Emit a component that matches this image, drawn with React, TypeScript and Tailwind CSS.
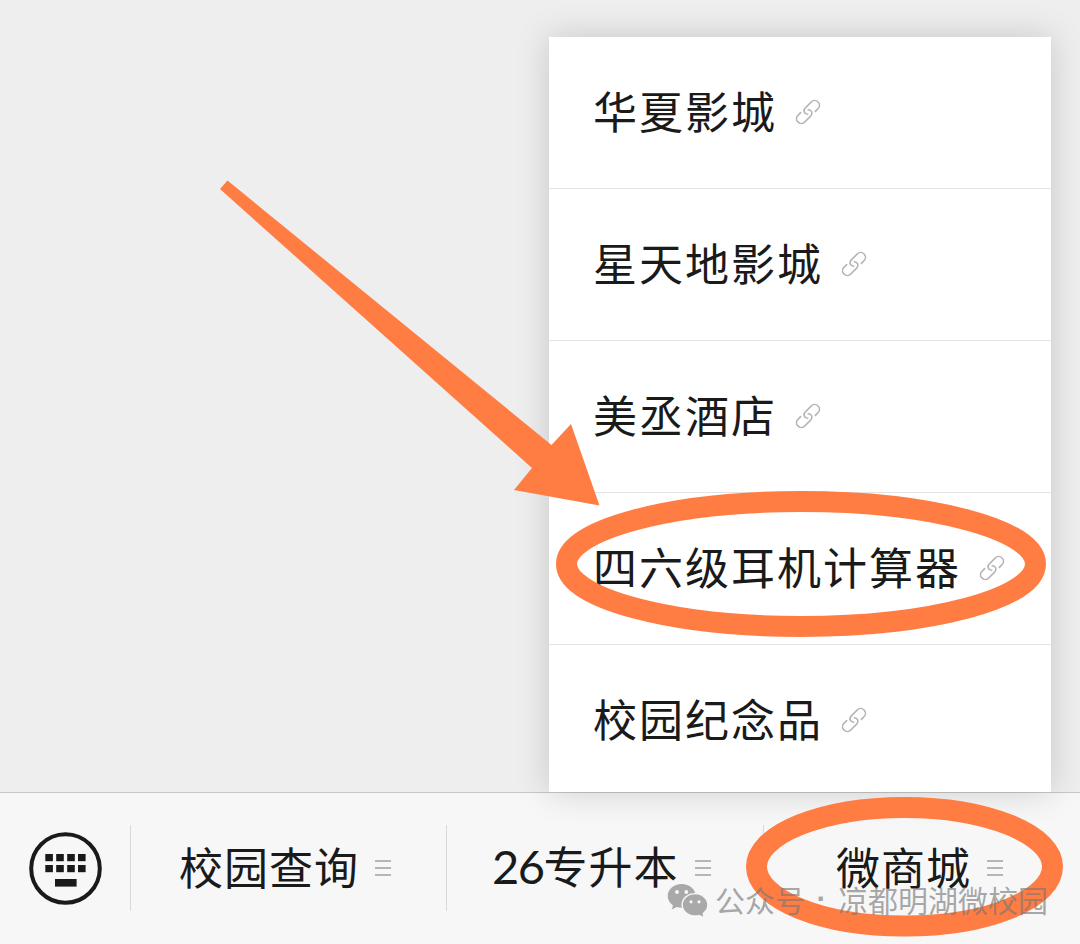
import React from 'react';

interface MenuItem { label: string; }
interface Tab { num?: string; label: string; className: string; }

const MENU: MenuItem[] = [
  { label: '华夏影城' },
  { label: '星天地影城' },
  { label: '美丞酒店' },
  { label: '四六级耳机计算器' },
  { label: '校园纪念品' },
];

const TABS: Tab[] = [
  { label: '校园查询', className: 'w-[316px] pl-[48px]' },
  { num: '26', label: '专升本', className: 'w-[317px] pl-[45px]' },
  { label: '微商城', className: 'w-[316px] pl-[72px]' },
];

function LinkIcon() {
  return (
    <svg width="26" height="26" viewBox="0 0 26 26" fill="none" stroke="#b3b3b3" strokeWidth="1.6" strokeLinecap="round" className="relative -top-px shrink-0">
      <g transform="translate(13 13) rotate(-45)">
        <path d="M-1.800 1.400C-4.200 -1.200 -2.400 -4.800 1 -4.800H9.400A4.800 4.800 0 0 1 9.400 4.800H5.600" />
        <path d="M1.800 -1.400C4.200 1.200 2.400 4.800 -1 4.800H-9.400A4.800 4.800 0 0 1 -9.400 -4.800H-5.600" />
      </g>
    </svg>
  );
}

function KeyboardIcon() {
  return (
    <svg width="74" height="74" viewBox="0 0 74 74" className="shrink-0">
      <circle cx="37.500" cy="36.500" r="34.300" fill="none" stroke="#1a1a1a" strokeWidth="4" />
      {[22, 33].map(y => [17.300, 28.200, 39.200, 50].map(x => (
        <rect key={`${x},${y}`} x={x} y={y} width="7.600" height="7.200" fill="#1a1a1a" />
      )))}
      <rect x="27" y="47" width="21.600" height="7.600" fill="#1a1a1a" />
    </svg>
  );
}

function WechatIcon() {
  return (
    <svg width="42" height="34" viewBox="0 0 42 34" className="shrink-0">
      <path d="M14.600 1C6.900 1 .7 6.300 .7 13c0 3.900 2 7.200 5.300 9.400L4.800 26.600l5-2.600c1.500.4 3.100.7 4.800.7 7.900 0 14.100-5.200 14.100-11.800S22.500 1 14.600 1Z" fill="#a9a9a9" />
      <ellipse cx="28" cy="21.800" rx="12.900" ry="11.200" fill="#a9a9a9" stroke="#f7f7f7" strokeWidth="1.400" />
      <path d="M31.500 31.500l4.700 2-1-4.800Z" fill="#a9a9a9" />
      <circle cx="10" cy="9" r="1.900" fill="#f7f7f7" />
      <circle cx="19.300" cy="9" r="1.900" fill="#f7f7f7" />
      <circle cx="24" cy="18.800" r="1.600" fill="#f7f7f7" />
      <circle cx="32" cy="18.800" r="1.600" fill="#f7f7f7" />
    </svg>
  );
}

export default function App() {
  return (
    <div className="relative flex h-[944px] w-[1080px] flex-col overflow-hidden bg-[#eeeeee] font-['Noto_Sans_CJK_SC',sans-serif] text-[44px] leading-none text-[#1a1a1a]">
      <div className="relative z-10 flex h-[792px] justify-end pt-[37px] pr-[29px]">
        <div className="h-[755px] w-[502px] bg-white shadow-[0_0_32px_rgba(0,0,0,0.17)]">
          {MENU.map((item, i) => (
            <div key={item.label} className={`flex h-[152px] items-center pl-[44px] tracking-[2px] ${i < MENU.length - 1 ? 'border-b border-[#e3e3e3]' : ''}`}>
              <span className="mr-[18px] pb-[6px] whitespace-nowrap">{item.label}</span>
              <LinkIcon />
            </div>
          ))}
        </div>
      </div>

      <div className="flex h-[152px] items-center border-t border-[#c8c8c8] bg-[#f7f7f7]">
        <div className="flex w-[130px] pl-[28px]"><KeyboardIcon /></div>
        {TABS.map(tab => (
          <div key={tab.label} className={`mb-[2px] flex h-[86px] items-center border-l border-[#d9d9d9] ${tab.className}`}>
            <div className={`mr-[16px] flex h-[44px] items-baseline whitespace-nowrap tracking-[1px] ${tab.num ? '-mt-[4px]' : ''}`}>
              {tab.num && <span className="font-['Lato'] text-[47px] leading-[44px] tracking-[-1.500px]">{tab.num}</span>}
              <span className="-mt-[2px]">{tab.label}</span>
            </div>
            <div className="flex w-4 flex-col gap-[5px]">
              <div className="h-[2px] bg-[#b5b5b5]" />
              <div className="h-[2px] bg-[#b5b5b5]" />
              <div className="h-[2px] bg-[#b5b5b5]" />
            </div>
          </div>
        ))}
      </div>

      {/* hand-drawn marks over the menu */}
      <svg width="1080" height="944" viewBox="0 0 1080 944" className="pointer-events-none absolute inset-0 z-20">
        <path d="M227.500 180.500L551.500 445L571 424L599.500 505.500L514 490L532 468L220 189Z" fill="#ff7c43" />
        <ellipse cx="801" cy="564" rx="234.500" ry="62.500" fill="none" stroke="#ff7c43" strokeWidth="21" />
        <ellipse cx="904.500" cy="866.800" rx="148" ry="59.300" fill="none" stroke="#ff7c43" strokeWidth="21" />
      </svg>

      <div className="absolute top-[883px] left-[667px] z-30 flex items-center text-[30px] text-[#777777]/65">
        <WechatIcon />
        <div className="ml-[6px] flex pb-[2px] whitespace-nowrap">
          <span>公众号</span>
          <span className="w-[33px] text-center font-['Liberation_Sans'] font-bold">·</span>
          <span>凉都明湖微校园</span>
        </div>
      </div>
    </div>
  );
}
